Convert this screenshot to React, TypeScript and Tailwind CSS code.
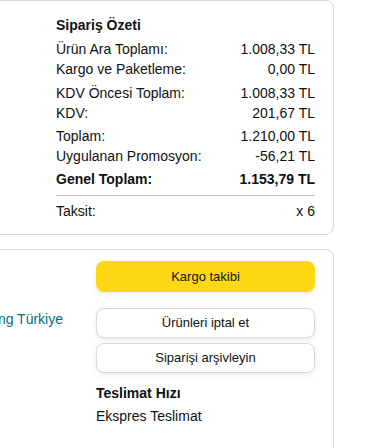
import React from "react";

const Row = ({ label, value, bold }: { label: string; value: string; bold?: boolean }) => (
  <div className={`flex justify-between leading-[20px] text-[14px] ${bold ? "font-bold" : ""}`}>
    <span>{label}</span>
    <span>{value}</span>
  </div>
);

export default function App() {
  return (
    <div
      className="w-[380px] h-[448px] overflow-hidden bg-white text-[#0F1111]"
      style={{ fontFamily: '"Liberation Sans", Arial, sans-serif' }}
    >
      <div className="ml-[-10px] w-[344px] border border-[#D5D9D9] rounded-[8px] pt-[14px] pb-[13px] pl-[65px] pr-[18px]">
        <div className="text-[14px] leading-[20px] font-bold">Sipariş Özeti</div>
        <div className="mt-[4px]">
          <Row label="Ürün Ara Toplamı:" value="1.008,33 TL" />
          <Row label="Kargo ve Paketleme:" value="0,00 TL" />
        </div>
        <div className="mt-[4px]">
          <Row label="KDV Öncesi Toplam:" value="1.008,33 TL" />
          <Row label="KDV:" value="201,67 TL" />
        </div>
        <div className="mt-[3px]">
          <Row label="Toplam:" value="1.210,00 TL" />
          <Row label="Uygulanan Promosyon:" value="-56,21 TL" />
        </div>
        <div className="mt-[3px]">
          <Row label="Genel Toplam:" value="1.153,79 TL" bold />
        </div>
        <div className="mt-[6px] h-px bg-[#BBBFBF]" />
        <div className="mt-[5px]">
          <Row label="Taksit:" value="x 6" />
        </div>
      </div>

      <div className="mt-[14px] ml-[-200px] w-[534px] h-[300px] border border-[#D5D9D9] rounded-[8px] flex pt-[11px] pr-[18px]">
        <div className="w-[262px] flex flex-col items-end">
          <div className="mt-[48px] whitespace-nowrap text-[14px] leading-[20px] text-[#007185]">
            Amazon Services Europe Trading Türkiye
          </div>
        </div>
        <div className="ml-[33px] flex-1 flex flex-col">
          <button className="h-[31px] w-full rounded-[8px] bg-[#FFD814] text-[13px] text-[#0F1111] shadow-[0_2px_5px_0_rgba(213,217,217,0.5)]">
            Kargo takibi
          </button>
          <button className="mt-[16px] h-[30px] w-full rounded-[8px] border border-[#D5D9D9] bg-white text-[13px] text-[#0F1111] shadow-[0_2px_5px_0_rgba(213,217,217,0.5)]">
            Ürünleri iptal et
          </button>
          <button className="mt-[5px] h-[30px] w-full rounded-[8px] border border-[#D5D9D9] bg-white text-[13px] text-[#0F1111] shadow-[0_2px_5px_0_rgba(213,217,217,0.5)]">
            Siparişi arşivleyin
          </button>
          <div className="mt-[10px] text-[14px] leading-[20px] font-bold">Teslimat Hızı</div>
          <div className="mt-[3px] text-[14px] leading-[20px]">Ekspres Teslimat</div>
        </div>
      </div>
    </div>
  );
}
